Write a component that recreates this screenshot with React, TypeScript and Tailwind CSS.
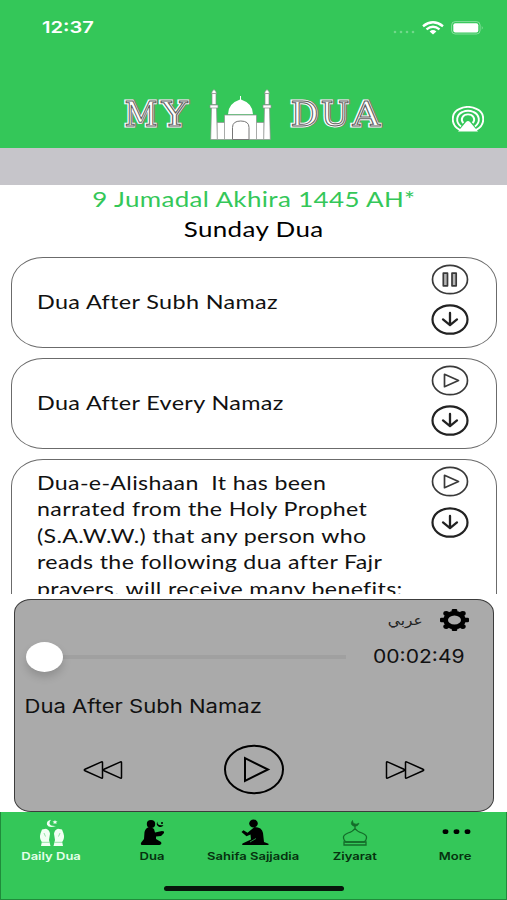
import React from "react";

const avenir = "font-['Lato','Open_Sans',sans-serif]";
const system = "font-['Inter','Roboto',sans-serif]";

function StatusBar() {
  return (
    <div className="flex h-[55px] items-center justify-between pl-[42px] pr-[23px]">
      <span className={`${system} origin-left scale-x-[1.22] text-[16.5px] font-semibold leading-none text-white`}>12:37</span>
      <div className="flex items-center">
        <svg width="24" height="12" viewBox="0 0 24 12" className="text-white/30" fill="currentColor">
          <circle cx="3" cy="10" r="1.3" /><circle cx="9" cy="10" r="1.3" /><circle cx="15" cy="10" r="1.3" /><circle cx="21" cy="10" r="1.3" />
        </svg>
        <svg width="22" height="14" viewBox="0 0 22 14" className="ml-[6px]" fill="none" stroke="white" strokeWidth="2.4">
          <path d="M1 5.2Q11 -2.5 21 5.2" />
          <path d="M4.5 8.4Q11 3.2 17.5 8.4" />
          <path d="M7.6 10.4Q11 7.8 14.4 10.4L11 13.4z" fill="white" stroke="none" />
        </svg>
        <svg width="33" height="14" viewBox="0 0 33 14" className="ml-[7px]" fill="none">
          <rect x=".6" y=".6" width="28.5" height="12.4" rx="3.6" stroke="white" strokeOpacity=".4" />
          <rect x="2.3" y="2.2" width="25" height="9.2" rx="2" fill="white" />
          <path d="M30.8 4.8q1.6 2 0 4z" fill="white" fillOpacity=".5" />
        </svg>
      </div>
    </div>
  );
}

function LogoLetter({ letter, x, width }: { letter: string; x: number; width: number }) {
  const common = {
    textLength: width,
    lengthAdjust: "spacingAndGlyphs" as const,
    fontSize: 33,
    fontFamily: "'DejaVu Serif', 'Liberation Serif', serif",
  };
  return (
    <g strokeLinejoin="miter">
      <text {...common} x={x + 1.3} y={38.4} fill="#6b7a70" stroke="#6b7a70" strokeWidth="2.8">{letter}</text>
      <text {...common} x={x} y={37.5} fill="#ffffff" stroke="#ffffff" strokeWidth="2.8">{letter}</text>
      <text {...common} x={x + 0.4} y={37.5} fill="#ffffff" stroke="#5f5f5f" strokeWidth="1">{letter}</text>
    </g>
  );
}

function Logo() {
  return (
    <svg width="264" height="54" viewBox="0 0 264 54">
      <LogoLetter letter="M" x={2} width={33} />
      <LogoLetter letter="Y" x={39} width={26} />
      <LogoLetter letter="D" x={168} width={28} />
      <LogoLetter letter="U" x={198} width={29} />
      <LogoLetter letter="A" x={230} width={27.5} />
      <g fill="white" stroke="#8b8f8c" strokeWidth=".7" transform="translate(1 1.500)">
        <path d="M94 33h8v17H94zM133 33h8v17h-8z" />
        <path d="M88.5 17.5h5l.8 32.5h-6.600zM141.500 17.500h5l.8 32.500h-6.600z" />
        <path d="M87 15.500h8v3h-8zM140 15.500h8v3h-8zM89 4h4v11h-4zM142 4h4v11h-4z" />
        <path d="M88.500 4q.3-2.500 2.500-4 2.200 1.500 2.500 4zM141.500 4q.3-2.500 2.500-4 2.200 1.500 2.500 4z" />
        <path d="M105 24.800Q105 14 117 10V6.500h1V10Q130 14 130 24.800z" stroke="none" />
        <path d="M101.500 25.500h32V50h-32z" />
        <path d="M109.500 50V38q0-6.500 8.250-6.500t8.250 6.500v12z" stroke="#777" strokeWidth="1" />
      </g>
    </svg>
  );
}

function AirPlay() {
  return (
    <svg width="32" height="27" viewBox="0 0 32 27" fill="none" stroke="white" strokeWidth="1.9">
      <path d="M8 24C-2 19-1 7 7 3.200Q16-1.400 25 3.200C33 7 34 19 24 24" />
      <path d="M9 20.500C3 16 4.500 8.500 10.500 6Q16 3.500 21.500 6C27.500 8.500 29 16 23 20.500" />
      <path d="M11.300 17.200C7.800 13 11 8.400 16 8.400S24.200 13 20.700 17.200" />
      <path d="M16 15Q17 15 18 16L26 25.500H6L14 16Q15 15 16 15z" fill="white" stroke="none" />
    </svg>
  );
}

function Round({ kind }: { kind: "pause" | "play" | "download" }) {
  return (
    <svg width="38" height="31" viewBox="0 0 38 31" fill="none" stroke={kind === "download" ? "#222222" : "#3a3a3a"} strokeLinejoin="round" strokeLinecap="round">
      <ellipse cx="19" cy="15.500" rx="17.500" ry="14.200" strokeWidth={kind === "download" ? 2.200 : 1.700} />
      {kind === "pause" && <path d="M12.300 9.200h4.200v12.600h-4.200zM21 9.200h4.200v12.600H21z" strokeWidth="1.700" fill="#b5b5b5" />}
      {kind === "play" && <path d="M13.500 9.300v12.400l14-6.200z" strokeWidth="1.700" />}
      {kind === "download" && <path d="M19 8.900v12M12 15.400l7 5.700 7-5.700" strokeWidth="2.300" />}
    </svg>
  );
}

function Card({ playing, tall, children }: { playing?: boolean; tall?: boolean; children: React.ReactNode }) {
  return (
    <div className={`flex shrink-0 justify-between rounded-[32px/27px] border border-[#6b6b6b] pl-[25px] pr-[27px] ${tall ? "h-[190px]" : "h-[91px] items-center"}`}>
      <div className={`${avenir} origin-left whitespace-pre text-[20px] leading-[26.400px] tracking-[0.300px] text-[#111] ${tall ? "scale-x-[1.158] pt-[9px]" : "-mt-[3px] scale-x-[1.170]"}`}>{children}</div>
      <div className={`flex flex-col gap-[9.500px] ${tall ? "pt-[6px]" : "-mt-[6px]"}`}>
        <Round kind={playing ? "pause" : "play"} />
        <Round kind="download" />
      </div>
    </div>
  );
}

function Gear() {
  return (
    <svg width="29" height="22" viewBox="0 0 29 22">
      <ellipse cx="14.500" cy="11" rx="8.800" ry="6.900" fill="none" stroke="black" strokeWidth="4.600" />
      <g fill="black">
        <rect x="11.700" y="0" width="5.600" height="4" rx="1.300" />
        <rect x="11.700" y="18" width="5.600" height="4" rx="1.300" />
        <rect x="0" y="8.800" width="5" height="4.400" rx="1.300" />
        <rect x="24" y="8.800" width="5" height="4.400" rx="1.300" />
        <ellipse cx="6.200" cy="4.400" rx="2.900" ry="2.400" /><ellipse cx="22.800" cy="4.400" rx="2.900" ry="2.400" />
        <ellipse cx="6.200" cy="17.600" rx="2.900" ry="2.400" /><ellipse cx="22.800" cy="17.600" rx="2.900" ry="2.400" />
      </g>
    </svg>
  );
}

function Skip({ back }: { back?: boolean }) {
  return (
    <svg width="40" height="20" viewBox="0 0 40 20" fill="none" stroke="black" strokeWidth="1.500" strokeLinejoin="round" className={back ? "-scale-x-100" : ""}>
      <path d="M1.500 2.600q0-1 1-.7L19 9.200q1.500.8 0 1.600L2.500 18.100q-1 .3-1-.7z" />
      <path d="M20.500 2.600q0-1 1-.7L38 9.200q1.500.8 0 1.600L21.500 18.100q-1 .3-1-.7z" />
    </svg>
  );
}

function Player() {
  return (
    <section className="ml-[14px] mr-[13px] mt-[5px] flex h-[213px] shrink-0 flex-col rounded-[17px/14px] border border-[#3c3c3c] bg-[#aaaaaa]">
      <div className="flex h-[40px] items-center justify-end gap-[17px] pr-[24px]">
        <span dir="rtl" className="origin-right scale-x-[1.100] font-['DejaVu_Sans',sans-serif] text-[14px] leading-none text-[#222]">عربي</span>
        <Gear />
      </div>
      <div className="flex h-[33px] items-center pl-[11px]">
        <div className="z-10 h-[30px] w-[37px] rounded-[50%] bg-white shadow-[0_5px_9px_rgba(0,0,0,0.160)]" />
        <div className="h-[4px] w-[283px] bg-[#a0a0a0]" />
        <span className={`${system} ml-[27px] origin-left scale-x-[1.140] text-[18.500px] leading-none text-[#111]`}>00:02:49</span>
      </div>
      <div className={`${system} mt-[19px] w-max origin-left scale-x-[1.192] pl-[8px] text-[18.500px] leading-[28px] text-[#111]`}>Dua After Subh Namaz</div>
      <div className="mt-[24px] flex items-center justify-between pl-[68px] pr-[68px]">
        <Skip back />
        <svg width="62" height="51" viewBox="0 0 62 51" fill="none" stroke="black" strokeWidth="2">
          <ellipse cx="31" cy="25.500" rx="29" ry="23.800" />
          <path d="M22 14.200v22.600l23-11.300z" />
        </svg>
        <Skip />
      </div>
    </section>
  );
}

const icons = {
  daily: (
    <g fill="#f2fff4">
      <path d="M15 .8q-5 1.200-4 5 2 3.700 9 1.200-6 .3-6.500-2.500 0-2.200 1.500-3.700z" />
      <path d="M19 1l.7 1.300 1.800.2-1.300 1 .3 1.500-1.500-.7-1.500.7.3-1.500-1.300-1 1.800-.2z" />
      <path d="M5 27l.8-4Q3 19 4.500 14.500L6 10.500l4-.8q3.500 1 4 5L13 21l1.500 6zM27 27l-.8-4Q29 19 27.500 14.500L26 10.500l-4-.8q-3.500 1-4 5L19 21l-1.500 6z" />
      <path d="M5.500 23.300h8M18.500 23.300h8M8 14l1.500 3.500M24 14l-1.500 3.500" stroke="#34c759" strokeWidth=".5" />
    </g>
  ),
  dua: (
    <g fill="black">
      <ellipse cx="14" cy="5" rx="4.200" ry="4" />
      <path d="M12 8q-3.500 1-4.500 5L7 20l-2 2.500q-2 2-.5 3.500h18q2.700-.7 1.500-3l-5-3v-2.500l5-.5 3-3v-1.500l-2-.5-7 1.500-1-3.500q-2-2-5-2z" />
      <path d="M20.500 2.500q-1 4.500 6 3.500-1.500 3-5 1.500-3-2-1-5z" />
      <circle cx="25" cy="4" r="1" />
    </g>
  ),
  sahifa: (
    <g fill="black" transform="translate(1 0)">
      <ellipse cx="14.500" cy="4.500" rx="4.300" ry="4" />
      <path d="M15.500 8q7.500 0 8.500 6l1 9 4.500 1.800V26H3.500q-1-.8.500-1.700L12 20.500l-.5-5-4 1.800L2.500 13l2-1.800 4 2.600z" />
      <path d="M11 23l6-3.500" stroke="#34c759" strokeWidth=".7" />
    </g>
  ),
  ziyarat: (
    <g fill="none" stroke="#146c2a" strokeWidth="1.300">
      <path d="M16 9.500V7M16 9.500q-2 3-7 4.500-5 2-4.500 5 .3 2.500 2.500 4h18q2.300-1.500 2.500-4 .5-3-4.500-5-5-1.500-7-4.500z" />
      <path d="M5 23h22v3H5z" />
      <path d="M13.500 1.500q-3 4 1.500 5.700 4 .5 5-3-3 1.700-5 .5-1.500-1.200-1.500-3.200z" fill="#146c2a" strokeWidth=".7" />
    </g>
  ),
  more: (
    <g fill="black"><ellipse cx="5.500" cy="12.700" rx="2.900" ry="2.400" /><ellipse cx="16.500" cy="12.700" rx="2.900" ry="2.400" /><ellipse cx="27.500" cy="12.700" rx="2.900" ry="2.400" /></g>
  ),
};

const tabs: { icon: keyof typeof icons; label: string }[] = [
  { icon: "daily", label: "Daily Dua" },
  { icon: "dua", label: "Dua" },
  { icon: "sahifa", label: "Sahifa Sajjadia" },
  { icon: "ziyarat", label: "Ziyarat" },
  { icon: "more", label: "More" },
];

function TabBar() {
  return (
    <nav className="flex h-[88px] shrink-0 flex-col items-center border-x border-b border-[#208b3b] bg-[#34c759]">
      <div className="grid w-full grid-cols-5">
        {tabs.map((t) => (
          <div key={t.label} className="flex flex-col items-center pt-[7px]">
            <svg width="32" height="28" viewBox="0 0 32 28">{icons[t.icon]}</svg>
            <span className={`${system} mt-[3px] scale-x-[1.240] whitespace-nowrap text-[10.500px] font-semibold leading-[13px] ${t.icon === "daily" ? "text-[#e4ffe9]" : "text-[#06320f]"}`}>{t.label}</span>
          </div>
        ))}
      </div>
      <div className="mt-[23px] h-[5px] w-[180px] rounded-full bg-[#07160b]" />
    </nav>
  );
}

export default function App() {
  return (
    <main className="flex h-[900px] w-[507px] flex-col overflow-hidden bg-white">
      <header className="h-[148px] shrink-0 bg-[#34c759]">
        <StatusBar />
        <div className="mt-[33px] flex justify-between pl-[122px] pr-[23px]">
          <Logo />
          <div className="pt-[18px]"><AirPlay /></div>
        </div>
      </header>
      <div className="h-[37px] shrink-0 bg-[#c6c5ca]" />
      <div className={`${avenir} flex h-[72px] shrink-0 flex-col items-center text-[21px] leading-[30px] tracking-[0.300px]`}>
        <div className="-mt-px scale-x-[1.235] text-[#34c759]">9 Jumadal Akhira 1445 AH*</div>
        <div className="scale-x-[1.235] text-black">Sunday Dua</div>
      </div>
      <div className="flex h-[337px] shrink-0 flex-col gap-[10px] overflow-hidden pl-[11px] pr-[10px]">
        <Card playing>Dua After Subh Namaz</Card>
        <Card>Dua After Every Namaz</Card>
        <Card tall>{"Dua-e-Alishaan  It has been\nnarrated from the Holy Prophet\n(S.A.W.W.) that any person who\nreads the following dua after Fajr\nprayers, will receive many benefits:"}</Card>
      </div>
      <Player />
      <TabBar />
    </main>
  );
}
